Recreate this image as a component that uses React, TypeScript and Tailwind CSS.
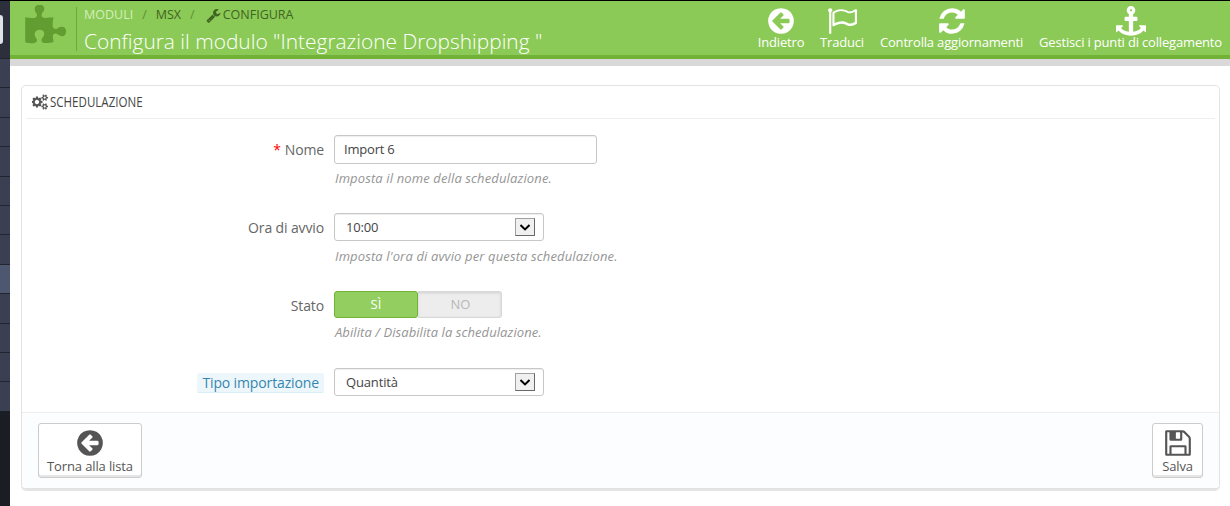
import type { ReactNode } from 'react';
import clsx from 'clsx';

const ICONS = {
  back: 'M1408 960v-128q0-26-19-45t-45-19h-502l189-189q19-19 19-45t-19-45l-91-91q-18-18-45-18t-45 18l-362 362-91 91q-18 18-18 45t18 45l91 91 362 362q18 18 45 18t45-18l91-91q18-18 18-45t-18-45l-189-189h502q26 0 45-19t19-45zm256-64q0 209-103 385.5t-279.5 279.5-385.5 103-385.5-103-279.5-279.5-103-385.5 103-385.5 279.5-279.5 385.5-103 385.5 103 279.5 279.5 103 385.5z',
  flag: 'M1664 957v-616q-169 91-306 91-82 0-145-32-100-49-184-76.5t-178-27.5q-173 0-403 127v599q245-113 433-113 55 0 103.5 7.5t98 26 77 31 82.5 39.5l28 14q44 22 101 22 120 0 293-92zm-1344-701q0 35-17.5 64t-46.5 46v1266q0 14-9 23t-23 9h-64q-14 0-23-9t-9-23v-1266q-29-17-46.5-46t-17.5-64q0-53 37.5-90.5t90.5-37.5 90.5 37.5 37.5 90.5zm1472 0v763q0 39-35 57-10 5-17 9-218 116-369 116-88 0-158-35l-28-14q-64-33-99-48t-91-29-114-14q-102 0-235.5 44t-228.5 102q-15 9-33 9-16 0-32-8-32-19-32-56v-742q0-35 31-55 35-21 78.5-42.5t114-52 152.5-49.5 155-19q112 0 209 31t209 86q38 19 89 19 122 0 310-112 22-12 31-17 31-16 62 2 31 20 31 55z',
  refresh:
    'M1639 1056q0 5-1 7-64 268-268 434.5t-478 166.5q-146 0-282.5-55t-243.5-157l-129 129q-19 19-45 19t-45-19-19-45v-448q0-26 19-45t45-19h448q26 0 45 19t19 45-19 45l-137 137q71 66 161 102t187 36q134 0 250-65t186-179q11-17 53-117 8-23 30-23h192q13 0 22.5 9.5t9.5 22.5zm25-800v448q0 26-19 45t-45 19h-448q-26 0-45-19t-19-45 19-45l138-138q-148-137-349-137-134 0-250 65t-186 179q-11 17-53 117-8 23-30 23h-199q-13 0-22.5-9.5t-9.5-22.5v-7q65-268 270-434.5t480-166.5q146 0 284 55.5t245 156.5l130-129q19-19 45-19t45 19 19 45z',
  anchor:
    'M960 256q0-26-19-45t-45-19-45 19-19 45 19 45 45 19 45-19 19-45zm832 928v352q0 22-20 30-8 2-12 2-13 0-23-9l-93-93q-119 143-318.5 226.5t-429.5 83.5-429.5-83.5-318.5-226.5l-93 93q-9 9-23 9-4 0-12-2-20-8-20-30v-352q0-14 9-23t23-9h352q22 0 30 20 8 19-7 35l-100 100q67 91 189.5 153.5t271.5 82.5v-647h-192q-26 0-45-19t-19-45v-128q0-26 19-45t45-19h192v-163q-58-34-93-92.5t-35-128.5q0-106 75-181t181-75 181 75 75 181q0 70-35 128.5t-93 92.5v163h192q26 0 45 19t19 45v128q0 26-19 45t-45 19h-192v647q149-20 271.5-82.5t189.5-153.5l-100-100q-15-16-7-35 8-20 30-20h352q14 0 23 9t9 23z',
  save: 'M512 1536h768v-384h-768v384zm896 0h128v-896q0-14-10-38.5t-20-34.5l-281-281q-10-10-34-20t-39-10v416q0 40-28 68t-68 28h-576q-40 0-68-28t-28-68v-416h-128v1280h128v-416q0-40 28-68t68-28h832q40 0 68 28t28 68v416zm-384-928v-320q0-13-9.5-22.5t-22.5-9.5h-192q-13 0-22.5 9.5t-9.5 22.5v320q0 13 9.5 22.5t22.5 9.5h192q13 0 22.5-9.5t9.5-22.5zm640 32v928q0 40-28 68t-68 28h-1344q-40 0-68-28t-28-68v-1344q0-40 28-68t68-28h928q40 0 88 20t76 48l280 280q28 28 48 76t20 88z',
  wrench:
    'M448 1472q0-26-19-45t-45-19-45 19-19 45 19 45 45 19 45-19 19-45zm644-420l-682 682q-37 37-90 37-52 0-91-37l-106-108q-38-36-38-90 0-53 38-91l681-681q39 98 114.5 173.5t173.5 114.5zm634-435q0 39-23 106-47 134-164.5 217.5t-258.5 83.5q-185 0-316.5-131.5t-131.5-316.5 131.5-316.5 316.5-131.5q58 0 121.5 16.5t107.5 46.5q16 11 16 28t-16 28l-293 169v224l193 107q5-3 79-48.5t135.5-81 70.5-35.5q15 0 23.5 10t8.5 25z',
  puzzle:
    'M1755 1083q0 81-44.5 135t-123.5 54q-41 0-77.5-17.5t-59-38-56.5-38-71-17.5q-110 0-110 124 0 39 16 115t15 115v5q-22 0-33 1-34 3-97.5 11.5t-115.5 13.5-98 5q-61 0-103-26.5t-42-83.5q0-37 17.5-71t38-56.5 38-59 17.5-77.5q0-79-54-123.5t-135-44.5q-84 0-143 45.5t-59 127.5q0 43 15 83t33.5 64.5 33.5 53 15 50.5q0 45-46 89-37 35-117 35-95 0-245-24-9-2-27.5-4t-27.5-4l-13-2q-1 0-3-1-2 0-2-1v-1024q2 1 17.5 3.5t34 5 21.5 3.5q150 24 245 24 80 0 117-35 46-44 46-89 0-22-15-50.5t-33.5-53-33.5-64.5-15-83q0-82 59-127.5t144-45.5q80 0 134 44.5t54 123.5q0 41-17.5 77.5t-38 59-38 56.5-17.5 71q0 57 42 83.5t103 26.5q64 0 180-15t163-17v2q-1 2-3.5 17.5t-5 34-3.5 21.5q-24 150-24 245 0 80 35 117 44 46 89 46 22 0 50.5-15t53-33.5 64.5-33.5 83-15q82 0 127.5 59t45.5 143z',
  cogs: 'M832 896q0-106-75-181t-181-75-181 75-75 181 75 181 181 75 181-75 75-181zm768 512q0-52-38-90t-90-38-90 38-38 90q0 53 37.5 90.5t90.5 37.5 90.5-37.5 37.5-90.5zm0-1024q0-52-38-90t-90-38-90 38-38 90q0 53 37.5 90.5t90.5 37.5 90.5-37.5 37.5-90.5zm-384 421v185q0 10-7 19.5t-16 10.5l-155 24q-11 35-32 76 34 48 90 115 7 11 7 20 0 12-7 19-23 30-82.5 89.5t-78.5 59.5q-11 0-21-7l-115-90q-37 19-77 31-11 108-23 155-7 24-30 24h-186q-11 0-20-7.5t-10-17.5l-23-153q-34-10-75-31l-118 89q-7 7-20 7-11 0-21-8-144-133-144-160 0-9 7-19 10-14 41-53t47-61q-23-44-35-82l-152-24q-10-1-17-9.5t-7-19.5v-185q0-10 7-19.5t16-10.5l155-24q11-35 32-76-34-48-90-115-7-11-7-20 0-12 7-20 22-30 82-89t79-59q11 0 21 7l115 90q34-18 77-32 11-108 23-154 7-24 30-24h186q11 0 20 7.5t10 17.5l23 153q34 10 75 31l118-89q8-7 20-7 11 0 21 8 144 133 144 160 0 9-7 19-12 16-42 54t-45 60q23 48 34 82l152 23q10 2 17 10.5t7 19.5zm640 533v140q0 16-149 31-12 27-30 52 51 113 51 138 0 4-4 7-122 71-124 71-8 0-46-47t-52-68q-20 2-30 2t-30-2q-14 21-52 68t-46 47q-2 0-124-71-4-3-4-7 0-25 51-138-18-25-30-52-149-15-149-31v-140q0-16 149-31 13-29 30-52-51-113-51-138 0-4 4-7 4-2 35-20t59-34 30-16q8 0 46 46.5t52 67.5q20-2 30-2t30 2q51-71 92-112l6-2q4 0 124 70 4 3 4 7 0 25-51 138 17 23 30 52 149 15 149 31zm0-1024v140q0 16-149 31-12 27-30 52 51 113 51 138 0 4-4 7-122 71-124 71-8 0-46-47t-52-68q-20 2-30 2t-30-2q-14 21-52 68t-46 47q-2 0-124-71-4-3-4-7 0-25 51-138-18-25-30-52-149-15-149-31v-140q0-16 149-31 13-29 30-52-51-113-51-138 0-4 4-7 4-2 35-20t59-34 30-16q8 0 46 46.5t52 67.5q20-2 30-2t30 2q51-71 92-112l6-2q4 0 124 70 4 3 4 7 0 25-51 138 17 23 30 52 149 15 149 31z',
};

type IconName = keyof typeof ICONS;

function Icon({ name, className }: { name: IconName; className?: string }) {
  return (
    <svg
      viewBox={name === 'cogs' ? '0 0 1856 1792' : '0 0 1792 1792'}
      fill="currentColor"
      className={clsx('shrink-0', className)}
    >
      <path d={ICONS[name]} />
    </svg>
  );
}

const TOOLBAR: { icon: IconName; label: string; width: string }[] = [
  { icon: 'back', label: 'Indietro', width: 'w-[46px]' },
  { icon: 'flag', label: 'Traduci', width: 'w-[44px]' },
  { icon: 'refresh', label: 'Controlla aggiornamenti', width: 'w-[143px]' },
  { icon: 'anchor', label: 'Gestisci i punti di collegamento', width: 'w-[183px]' },
];

const MENU_ROWS = Array.from({ length: 12 }, (_, i) => i);

function Sidebar() {
  return (
    <aside className="flex w-[10px] shrink-0 flex-col bg-[#1b1d25]">
      <div className="h-[57px] bg-[#2c303d] pt-[14px]">
        <div className="h-[29px] w-[3px] rounded-r-sm bg-[#dfe3e8]" />
      </div>
      {MENU_ROWS.map((row) => (
        <div
          key={row}
          className={clsx(
            'h-[29.4px] border-t border-[#22252f]',
            row === 7 ? 'bg-[#4e5770]' : 'bg-[#3a3f51]',
          )}
        />
      ))}
    </aside>
  );
}

function Field({
  label,
  hint,
  hintClassName = 'mt-[5px] tracking-[0.13px]',
  className,
  children,
}: {
  label: ReactNode;
  hint?: string;
  hintClassName?: string;
  className: string;
  children: ReactNode;
}) {
  return (
    <div className={clsx('flex', className)}>
      <div className="flex h-7 w-[302px] shrink-0 items-center justify-end text-[14px] tracking-[-0.13px] text-[#666]">
        {label}
      </div>
      <div className="ml-[10px]">
        {children}
        {hint ? (
          <p className={clsx('ml-px text-[13px] leading-[18px] whitespace-nowrap text-[#959595] italic', hintClassName)}>
            {hint}
          </p>
        ) : null}
      </div>
    </div>
  );
}

function Select({ value }: { value: string }) {
  return (
    <div className="flex h-7 w-[210px] items-center justify-between rounded-[3px] border border-[#c7c7c7] pr-2 pl-[11px] text-[13px] tracking-[-0.15px] text-[#444] shadow-[inset_0_1px_1px_rgba(0,0,0,0.07)]">
      <span className="pt-[2px]">{value}</span>
      <span className="flex h-[18px] w-5 items-center justify-center border border-t-[#a0a0a0] border-r-[#696969] border-b-[#696969] border-l-[#a0a0a0] bg-[#f0f0f0]">
        <svg viewBox="0 0 10 7" className="h-[7px] w-[10px]" fill="none" stroke="#000" strokeWidth="2">
          <path d="M0.5 1 5 5.4 9.5 1" />
        </svg>
      </span>
    </div>
  );
}

function FooterButton({ icon, label, className }: { icon: IconName; label: string; className: string }) {
  return (
    <button
      type="button"
      className={clsx(
        'flex h-[55px] flex-col items-center rounded-[3px] border border-[#ccc] bg-white pt-[4px] text-[13px] leading-[17px] tracking-[-0.13px] whitespace-nowrap text-[#555] shadow-[inset_0_-2px_0_#e6e6e6]',
        className,
      )}
    >
      <Icon name={icon} className="size-[30px]" />
      <span>{label}</span>
    </button>
  );
}

export default function App() {
  return (
    <div className="h-[506px] w-[1230px] overflow-hidden border-t border-black bg-white font-['Open_Sans',sans-serif]">
      <div className="flex h-[505px]">
        <Sidebar />
        <div className="min-w-0 flex-1">
          <header className="flex h-[58px] border-b-4 border-[#72b236] bg-[#8cca57]">
            <Icon name="puzzle" className="mt-[4px] ml-[13px] size-[44px] text-[#619d31]" />
            <div className="mt-[6px] ml-[9px] h-11 w-px bg-[#6caa3b]" />
            <div className="ml-[7px]">
              <div className="mt-[6px] flex h-4 items-center text-[12.5px] text-[#3f6420]">
                <span className="text-[#d3efbb]">MODULI</span>
                <span className="mx-[9px] text-[#5e8e38]">/</span>
                <span>MSX</span>
                <span className="mx-[9px] text-[#5e8e38]">/</span>
                <Icon name="wrench" className="mr-[2px] ml-[2px] size-[15px]" />
                <span>CONFIGURA</span>
              </div>
              <h1 className="mt-[2px] text-[20.9px] leading-8 font-light whitespace-nowrap text-white">
                Configura il modulo "Integrazione Dropshipping "
              </h1>
            </div>
            <div className="mr-[8px] ml-auto flex gap-[16px] pt-[5px] text-[13px] leading-4 tracking-[-0.17px] whitespace-nowrap text-white">
              {TOOLBAR.map((item) => (
                <div key={item.label} className={clsx('flex flex-col items-center', item.width)}>
                  <Icon name={item.icon} className="size-[30px]" />
                  <span className="-mt-[2px]">{item.label}</span>
                </div>
              ))}
            </div>
          </header>
          <div className="h-[7px] bg-[#d9d9d9]" />

          <section className="mt-[19px] ml-[11px] h-[405px] w-[1199px] overflow-hidden rounded-[5px] border border-[#e3e3e3] border-b-2 shadow-[0_1px_0_#e6e6e6]">
            <div className="mx-[4px] flex h-[33px] items-center border-b border-[#eee] pl-[6px] text-[#555]">
              <Icon name="cogs" className="h-[16px] w-[16px]" />
              <h2 className="ml-[2px] origin-left scale-x-[0.825] text-[14px] leading-8 text-[#444]">SCHEDULAZIONE</h2>
            </div>
            <form className="h-[293px]">
              <Field
                className="pt-[16px]"
                label={
                  <>
                    <span className="mr-1 text-[#f00]">*</span>Nome
                  </>
                }
                hint="Imposta il nome della schedulazione."
              >
                <input
                  defaultValue="Import 6"
                  className="block h-[29px] w-[263px] rounded-[3px] border border-[#c7c7c7] px-[9px] pb-[2px] text-[13px] tracking-[-0.2px] text-[#444] shadow-[inset_0_1px_1px_rgba(0,0,0,0.07)]"
                />
              </Field>
              <Field
                className="mt-[26px]"
                label="Ora di avvio"
                hint="Imposta l'ora di avvio per questa schedulazione."
                hintClassName="mt-[6px] tracking-[0.13px]"
              >
                <Select value="10:00" />
              </Field>
              <Field
                className="mt-[26px]"
                label="Stato"
                hint="Abilita / Disabilita la schedulazione."
                hintClassName="mt-[5px] tracking-[0.08px]"
              >
                <div className="flex h-[27px] w-[168px] text-[13px]">
                  <span className="flex w-[84px] items-center justify-center rounded-[3px] border border-[#72b236] bg-[#92cf60] text-white">
                    SÌ
                  </span>
                  <span className="flex w-[84px] items-center justify-center rounded-r-[3px] border border-l-0 border-[#d8d8d8] bg-[#ededed] pl-[2px] text-[#b8b8b8] shadow-[inset_0_1px_3px_rgba(0,0,0,0.12)]">
                    NO
                  </span>
                </div>
              </Field>
              <Field
                className="mt-[27px]"
                label={
                  <span className="mt-[2px] h-[20px] rounded-[2px] border-b border-[#d8eef8] bg-[#edf7fb] px-[5px] leading-[20px] text-[#3586ae]">
                    Tipo importazione
                  </span>
                }
              >
                <Select value="Quantità" />
              </Field>
            </form>
            <footer className="flex h-[78px] justify-between border-t border-[#eee] bg-[#fcfdfe] px-[16px] pt-[10px]">
              <FooterButton icon="back" label="Torna alla lista" className="w-[104px]" />
              <FooterButton icon="save" label="Salva" className="w-[51px]" />
            </footer>
          </section>
        </div>
      </div>
    </div>
  );
}
